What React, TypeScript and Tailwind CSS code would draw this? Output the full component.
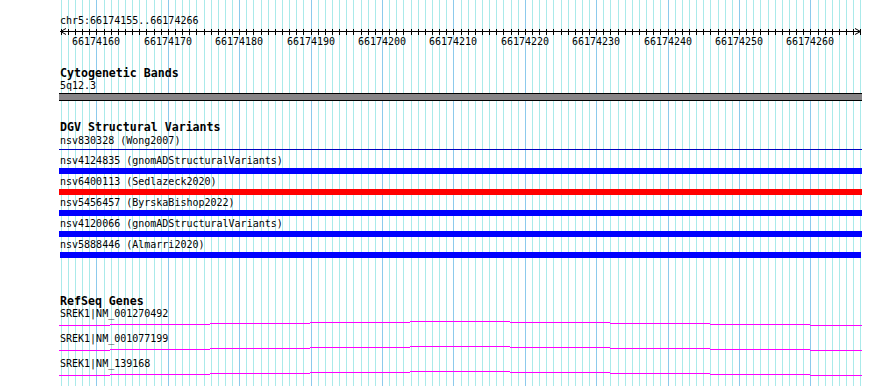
import React from 'react';

const mono = "font-['DejaVu_Sans_Mono','Liberation_Mono',monospace]";

// one grid line per base, 66174155..66174267
const BP_START = 66174155;
const lines = Array.from({ length: 113 }, (_, i) => Math.round(60.7 + 7.14 * i));

const variants = [
  { id: 'nsv4124835', src: 'gnomADStructuralVariants', color: 'bg-[#0000ff]' },
  { id: 'nsv6400113', src: 'Sedlazeck2020', color: 'bg-[#ff0000]' },
  { id: 'nsv5456457', src: 'ByrskaBishop2022', color: 'bg-[#0000ff]' },
  { id: 'nsv4120066', src: 'gnomADStructuralVariants', color: 'bg-[#0000ff]' },
  { id: 'nsv5888446', src: 'Almarri2020', color: 'bg-[#0000ff]', last: true },
];

const genes = ['SREK1|NM_001270492', 'SREK1|NM_001077199', 'SREK1|NM_139168'];

// coverage-like step line, x in page coords
const steps = [
  [59, 110, 4],
  [110, 210, 3],
  [210, 310, 2],
  [310, 410, 1],
  [410, 510, 0],
  [510, 610, 1],
  [610, 710, 2],
  [710, 810, 3],
  [810, 862, 4],
];

const Grid: React.FC = () => (
  <svg className="absolute inset-0" width={890} height={386}>
    {lines.map((x, i) => (
      <line
        key={i}
        x1={x + 0.5}
        x2={x + 0.5}
        y1={0}
        y2={386}
        stroke={i % 10 === 5 ? '#8ccaec' : '#aaeaea'}
        strokeWidth={1}
      />
    ))}
  </svg>
);

const Ruler: React.FC = () => (
  <svg width={803} height={20} className="block">
    <line x1={1} x2={802} y1={4.5} y2={4.5} stroke="#000" />
    {lines.map((x, i) => (
      <line key={i} x1={x - 59 + 0.5} x2={x - 59 + 0.5} y1={2} y2={8} stroke="#000" />
    ))}
    <polyline points="7,1.5 1.5,4.5 7,7.5" fill="none" stroke="#000" />
    <polyline points="796,1.5 801.5,4.5 796,7.5" fill="none" stroke="#000" />
    {lines
      .map((x, i) => ({ x, i }))
      .filter(({ i }) => i % 10 === 5)
      .map(({ x, i }) => (
        <text
          key={i}
          x={x - 59}
          y={17.5}
          textAnchor="middle"
          fontFamily="DejaVu Sans Mono, monospace"
          fontSize={10}
          fill="#000"
        >
          {BP_START + i}
        </text>
      ))}
  </svg>
);

const TrackTitle: React.FC<{ title: string; className?: string }> = ({ title, className }) => (
  <div className={`${mono} text-[11.6px] font-bold leading-[13px] text-black ${className ?? ''}`}>{title}</div>
);

const Label: React.FC<{ text: string; className?: string }> = ({ text, className }) => (
  <div className={`${mono} text-[10px] leading-[12px] text-black whitespace-pre ${className ?? ''}`}>{text}</div>
);

export default function App() {
  return (
    <div className="relative h-[386px] w-[890px] overflow-hidden bg-white">
      <Grid />
      <div className="relative flex w-[803px] flex-col pl-[1px] ml-[59px] pt-[15px]">
        <Label text="chr5:66174155..66174266" />
        <div className="-ml-[1px]">
          <Ruler />
        </div>

        <TrackTitle title="Cytogenetic Bands" className="mt-[20px]" />
        <Label text="5q12.3" />
        <div className="-ml-[1px] mt-[1px] h-[8px] border-y border-black bg-[#878587]" />

        <TrackTitle title="DGV Structural Variants" className="mt-[20px]" />
        <Label text="nsv830328 (Wong2007)" className="mt-[1px]" />
        <div className="-ml-[1px] mt-[2px] h-[1px] bg-[#0000c0]" />
        {variants.map((v) => (
          <div key={v.id} className="flex flex-col">
            <Label text={`${v.id} (${v.src})`} className={v.id === 'nsv4124835' ? 'mt-[5px]' : 'mt-[2px]'} />
            <div className={`mt-[1px] h-[6px] ${v.color} ${v.last ? 'mr-[1px]' : '-ml-[1px]'}`} />
          </div>
        ))}

        <TrackTitle title="RefSeq Genes" className="mt-[37px]" />
        {genes.map((g, gi) => (
          <div key={g} className="flex flex-col">
            <Label text={g} className={gi === 0 ? '' : 'mt-[7px]'} />
            <svg width={803} height={6} className="-ml-[1px] block">
              {steps.map(([a, b, dy]) => (
                <line key={a} x1={a - 59} x2={b - 59} y1={dy + 1.5} y2={dy + 1.5} stroke="#ff00ff" />
              ))}
            </svg>
          </div>
        ))}
      </div>
    </div>
  );
}
